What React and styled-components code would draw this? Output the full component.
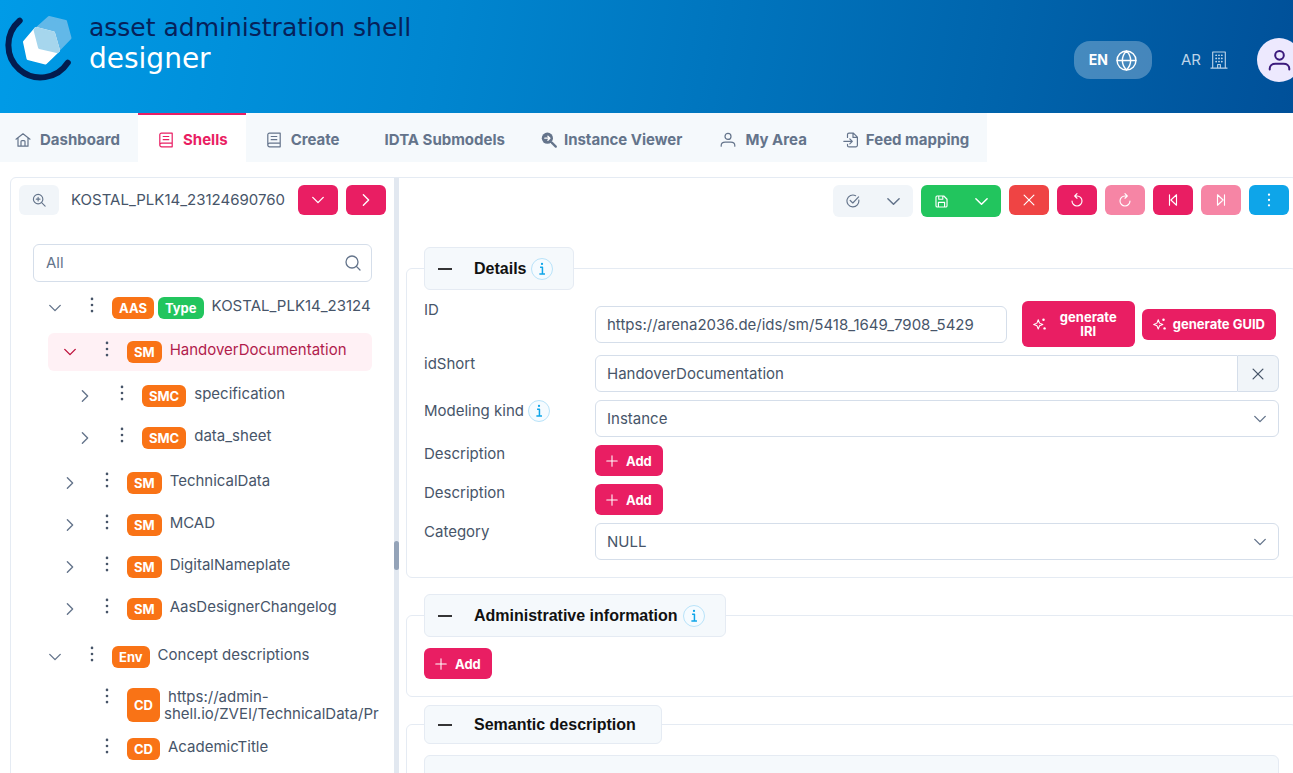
import React from "react";
import styled, { createGlobalStyle, css } from "styled-components";

const c = {
  pink: "#e91e63",
  pinkSoft: "#f685a5",
  orange: "#f97316",
  green: "#22c55e",
  red: "#ef4444",
  sky: "#0ea5e9",
  text: "#475569",
  muted: "#64748b",
  border: "#d5deea",
  line: "#e5ebf3",
  surface: "#f5f9fc",
  button: "#f1f5f9",
};

const GlobalStyle = createGlobalStyle`
  *, *::before, *::after { box-sizing: border-box; }
  body {
    margin: 0;
    background: #fff;
    color: ${c.text};
    font-family: Inter, "Liberation Sans", sans-serif;
    font-size: 15px;
    line-height: 18px;
  }
  button, input, select { font: inherit; color: inherit; }
  button { cursor: pointer; }
`;

/* ---------- icons ---------- */

const Glyph = styled.svg`
  display: block;
  flex: none;
  width: ${(p) => p.$size}px;
  height: ${(p) => p.$size}px;
  fill: none;
  stroke: currentColor;
  stroke-width: ${(p) => p.$weight};
  stroke-linecap: round;
  stroke-linejoin: round;
`;

const shapes = {
  home: (
    <path d="M1 7.2 8 1.8l7 5.4M3 6v8.2h10V6M6 14V9.6a1 1 0 0 1 1-1h2a1 1 0 0 1 1 1V14" />
  ),
  book: (
    <path d="M14 11.2H3.6a1.8 1.8 0 0 0 0 3.6H14.2V1.2H3.4a1.6 1.6 0 0 0-1.6 1.6V13M5.2 4.5h5.6M5.2 7.7h5.6" />
  ),
  searchSolid: (
    <>
      <circle cx="6.4" cy="6.2" r="5.6" fill="currentColor" stroke="none" />
      <path d="m10.8 10.6 4 4" strokeWidth="2.2" />
      <path d="M3.8 6.2h5M6.9 4.2l2 2-2 2" stroke="#fff" strokeWidth="1.3" />
    </>
  ),
  user: (
    <>
      <circle cx="8" cy="4.4" r="3" />
      <path d="M1.2 14.2v-.6c0-2.2 1.8-3.4 4-3.4h5.6c2.2 0 4 1.2 4 3.4v.6" />
    </>
  ),
  fileImport: (
    <path d="M4.5 5.5V2.6a1.5 1.5 0 0 1 1.5-1.5h4.4l4 4v8.2a1.6 1.6 0 0 1-1.6 1.6H6a1.5 1.5 0 0 1-1.5-1.5v-1M10 1.3v4.1h4.2M.8 9.3h8.4M6.8 6.8l2.5 2.5-2.5 2.5" />
  ),
  searchPlus: (
    <>
      <circle cx="7" cy="7" r="5.4" />
      <path d="m11 11 4 4M7 4.9v4.2M4.9 7h4.2" />
    </>
  ),
  search: (
    <>
      <circle cx="7" cy="7" r="6" />
      <path d="m11.4 11.4 3.6 3.6" />
    </>
  ),
  down: <path d="m2 5 6 6 6-6" />,
  right: <path d="m5 2 6 6-6 6" />,
  dots: (
    <g fill="currentColor" stroke="none">
      <circle cx="8" cy="1.9" r="1.3" />
      <circle cx="8" cy="8" r="1.3" />
      <circle cx="8" cy="14.1" r="1.3" />
    </g>
  ),
  checkCircle: (
    <path d="M14.6 6.8A6.8 6.8 0 1 1 11 1.9M4.8 7.4 7.8 10.3 14.4 3.4" />
  ),
  save: (
    <path d="M2.6 1.2h8.2l4 4v8a1.6 1.6 0 0 1-1.6 1.6H2.8a1.6 1.6 0 0 1-1.6-1.6V2.8a1.6 1.6 0 0 1 1.4-1.6ZM4.2 14.6V9h7.6v5.6M4.6 1.4v3.8h5V1.4" />
  ),
  times: <path d="m2.4 2.4 11.2 11.2M13.6 2.4 2.4 13.6" />,
  undo: <path d="M5.6 3.4H8a5.7 5.7 0 1 1-5.7 5.7M8 .8 5.4 3.4 8 6" />,
  redo: <path d="M10.4 3.4H8a5.7 5.7 0 1 0 5.7 5.7M8 .8l2.6 2.6L8 6" />,
  stepBack: <path d="M4 2v12M12 2v12L5.600 8 12 2Z" />,
  stepForward: <path d="M12 2v12M4 2v12L10.400 8 4 2Z" />,
  sparkles: (
    <>
      <path d="M6 3.2 7.5 7 11.2 8.5 7.5 10 6 13.8 4.5 10 .8 8.5 4.5 7 6 3.2Z" />
      <g fill="currentColor" stroke="none">
        <circle cx="12" cy="3.2" r="1.4" />
        <circle cx="13.2" cy="13" r="1.4" />
      </g>
    </>
  ),
  plus: <path d="M8 1v14M1 8h14" />,
  minus: <path d="M1 8h14" strokeLinecap="butt" />,
  info: (
    <>
      <path d="M5.8 6h2.7v7.6M5 13.8h6.4" strokeLinecap="butt" />
      <circle cx="8" cy="2.2" r="1.3" fill="currentColor" stroke="none" />
    </>
  ),
  globe: (
    <>
      <circle cx="8" cy="8" r="7.2" />
      <path d="M.9 8h14.2M8 .8c-4.2 4.2-4.2 10.2 0 14.4M8 .8c4.2 4.2 4.2 10.2 0 14.4" />
    </>
  ),
  building: (
    <>
      <path d="M2.4 15V.9h11.2V15M.8 15.2h14.4M6.8 15v-3h2.4v3" />
      <path
        d="M5.4 3.8h.2M7.9 3.8h.2M10.4 3.8h.2M5.4 6.6h.2M7.9 6.6h.2M10.4 6.6h.2M5.4 9.4h.2M7.9 9.4h.2M10.4 9.4h.2"
        strokeWidth="1.5"
      />
    </>
  ),
};

const Icon = ({ name, size = 14, weight = 1.2 }) => (
  <Glyph viewBox="0 0 16 16" $size={size} $weight={weight} aria-hidden="true">
    {shapes[name]}
  </Glyph>
);

/* ---------- shell ---------- */

const Page = styled.div`
  height: 100vh;
  overflow: hidden;
`;

const Header = styled.header`
  display: flex;
  align-items: flex-start;
  justify-content: space-between;
  height: 113px;
  padding-left: 5px;
  background: linear-gradient(100deg, #009be7 0%, #0086d0 34%, #0065ad 76%, #005099 100%);
`;

const Brand = styled.a`
  display: flex;
  gap: 16px;
  padding-top: 14px;
  color: #fff;
  text-decoration: none;
`;

const BrandMark = styled.svg`
  display: block;
  width: 68px;
  height: 68px;
`;

const BrandText = styled.span`
  display: flex;
  flex-direction: column;
  font-family: "DejaVu Sans", sans-serif;
`;

const BrandLine = styled.span`
  color: #06215a;
  font-size: 25px;
  line-height: 28px;
`;

const BrandName = styled.span`
  font-size: 28px;
  line-height: 34px;
`;

const HeaderTools = styled.div`
  display: flex;
  align-items: center;
  gap: 29px;
  margin: 38px -8px 0 0;
`;

const Language = styled.button`
  display: flex;
  align-items: center;
  gap: 8px;
  height: 38px;
  padding: 0 15px;
  border: 0;
  border-radius: 16px;
  background: rgba(255, 255, 255, 0.27);
  color: #fff;
  font-size: 14px;
  font-weight: 700;
`;

const Tenant = styled.button`
  display: flex;
  align-items: center;
  gap: 9px;
  padding: 0;
  border: 0;
  background: none;
  color: #bcd3e8;
`;

const Avatar = styled.button`
  display: grid;
  place-items: center;
  width: 44px;
  height: 44px;
  padding: 0;
  border: 0;
  border-radius: 50%;
  background: #ede9fe;
  color: #3b1a7c;
`;

const Tabs = styled.nav`
  display: flex;
  width: max-content;
  background: ${c.surface};
`;

const Tab = styled.a`
  display: flex;
  align-items: center;
  gap: 7px;
  height: 49px;
  padding: 2px 18px 0;
  border-top: 2px solid transparent;
  color: ${c.muted};
  font-weight: 700;
  font-size: 15px;
  text-decoration: none;
  &:first-child { padding-left: 13px; }
  ${(p) =>
    p.$active &&
    css`
      border-top-color: ${c.pink};
      background: #fff;
      color: ${c.pink};
    `}
`;

const TabIcon = styled.span`
  display: grid;
  place-items: center;
  width: ${(p) => p.$width}px;
  height: 20px;
`;

const Workspace = styled.main`
  display: flex;
  min-height: 98vh;
  margin: 15px -5px 0 10px;
  border: 1px solid ${c.line};
  border-radius: 6px;
`;

const Splitter = styled.div`
  display: flex;
  align-items: center;
  flex: 0 0 5px;
  background: #e2e8f0;
`;

const SplitterHandle = styled.div`
  width: 5px;
  height: 29px;
  border-radius: 3px;
  background: #94a3b8;
`;

/* ---------- buttons ---------- */

const tones = {
  plain: [c.button, c.muted],
  pink: [c.pink, "#fff"],
  soft: [c.pinkSoft, "#fff"],
  green: [c.green, "#fff"],
  red: [c.red, "#fff"],
  sky: [c.sky, "#fff"],
};

const IconButton = styled.button`
  display: grid;
  place-items: center;
  width: 40px;
  height: 30px;
  padding: 0;
  border: 0;
  border-radius: 6px;
  background: ${(p) => tones[p.$tone][0]};
  color: ${(p) => tones[p.$tone][1]};
`;

const SplitButton = styled.div`
  display: flex;
  border-radius: 6px;
  overflow: hidden;
  ${IconButton} {
    height: 32px;
    border-radius: 0;
  }
`;

const ActionButton = styled.button`
  display: inline-flex;
  align-items: center;
  gap: ${(p) => (p.$tight ? 6 : 8)}px;
  width: ${(p) => (p.$wrap ? "113px" : "auto")};
  min-height: ${(p) => (p.$wrap ? 46 : 31)}px;
  padding: 0 11px;
  border: 0;
  border-radius: 6px;
  background: ${c.pink};
  color: #fff;
  font-size: 13px;
  font-weight: 700;
  line-height: 14px;
  vertical-align: top;
`;

const ActionLabel = styled.span`
  flex: 1;
  text-align: center;
`;

/* ---------- sidebar ---------- */

const Sidebar = styled.aside`
  flex: 0 0 383px;
  min-width: 0;
`;

const SidebarBar = styled.div`
  display: flex;
  align-items: center;
  gap: 8px;
  padding: 7px 8px 0;
`;

const ShellName = styled.span`
  flex: 1;
  padding-left: 4px;
  white-space: nowrap;
`;

const Explorer = styled.div`
  padding: 29px 22px 0;
`;

const SearchBox = styled.label`
  display: flex;
  align-items: center;
  height: 38px;
  padding: 0 10px 0 12px;
  border: 1px solid ${c.border};
  border-radius: 6px;
  color: ${c.muted};
`;

const SearchInput = styled.input`
  flex: 1;
  min-width: 0;
  padding: 0;
  border: 0;
  outline: 0;
  background: none;
  &::placeholder { color: ${c.muted}; opacity: 1; }
`;

const TreeList = styled.ul`
  display: flex;
  flex-direction: column;
  gap: ${(p) => (p.$root ? 7 : 4)}px;
  margin: ${(p) => (p.$root ? "7px 0 0" : "6px 0 3px")};
  padding: 0 0 0 ${(p) => (p.$root ? 0 : 15)}px;
  list-style: none;
`;

const TreeRow = styled.div`
  display: flex;
  align-items: flex-start;
  gap: 4px;
  padding: ${(p) => (p.$leaf ? "6px 0" : "8px 0")};
  border-radius: 6px;
  ${(p) =>
    p.$active &&
    css`
      background: #fff1f5;
      color: #b11c4c;
    `}
`;

const Toggle = styled.button`
  display: grid;
  flex: none;
  place-items: center;
  width: 28px;
  height: 21px;
  margin-left: 8px;
  padding: 0;
  border: 0;
  background: none;
  color: ${(p) => (p.$active ? "#be123c" : c.muted)};
  visibility: ${(p) => (p.$hidden ? "hidden" : "visible")};
`;

const RowMenu = styled.button`
  display: grid;
  flex: none;
  place-items: center;
  width: 35px;
  height: 14px;
  padding: 0 0 0 2px;
  border: 0;
  background: none;
  color: ${c.text};
`;

const Badge = styled.span`
  display: flex;
  flex: none;
  align-items: center;
  align-self: stretch;
  min-height: 22px;
  padding: 0 7px;
  border-radius: 6px;
  background: ${(p) => (p.$green ? c.green : c.orange)};
  color: #fff;
  font-size: 13px;
  font-weight: 700;
`;

const NodeLabel = styled.span`
  flex: 1;
  min-width: 0;
  line-height: 17px;
  text-indent: 4px;
  white-space: ${(p) => (p.$wrap ? "normal" : "nowrap")};
`;

/* ---------- editor ---------- */

const Editor = styled.section`
  flex: 1;
  min-width: 0;
  padding-left: 7px;
`;

const Toolbar = styled.div`
  display: flex;
  justify-content: flex-end;
  gap: 8px;
  padding: 7px 8px 30px 0;
`;

const Sections = styled.div`
  display: flex;
  flex-direction: column;
  gap: 8px;
`;

const Group = styled.fieldset`
  min-width: 0;
  margin: 0 0 ${(p) => (p.$spaced ? 8 : 0)}px;
  padding: 11px 17px 17px;
  border: 1px solid ${c.line};
  border-radius: 6px;
`;

const Legend = styled.legend`
  padding: 0;
`;

const LegendButton = styled.button`
  display: flex;
  align-items: center;
  height: ${(p) => (p.$info ? 43 : 39)}px;
  padding: 0 20px 0 12px;
  border: 1px solid ${c.line};
  border-radius: 6px;
  background: ${c.surface};
  color: #111;
  font-family: "Liberation Sans", Arial, sans-serif;
  font-size: 16px;
  font-weight: 700;
`;

const LegendText = styled.span`
  padding: 0 5px 0 21px;
`;

const InfoBadge = styled.span`
  display: inline-grid;
  place-items: center;
  width: 22px;
  height: 22px;
  border: 1px solid #b9e3f9;
  border-radius: 50%;
  background: #f5fbff;
  color: ${c.sky};
`;

const FormGrid = styled.div`
  display: grid;
  grid-template-columns: 163px minmax(0, 1fr);
  gap: 8px;
`;

const FieldLabel = styled.label`
  display: flex;
  align-items: center;
  align-self: start;
  gap: 4px;
`;

const FieldRow = styled.div`
  display: flex;
  align-items: center;
  gap: 7px;
  padding-right: ${(p) => (p.$inset ? 3 : 0)}px;
`;

const TextInput = styled.input`
  flex: 1;
  min-width: 0;
  height: 37px;
  margin-right: ${(p) => (p.$spaced ? 8 : 0)}px;
  padding: 0 11px;
  border: 1px solid ${c.border};
  border-radius: 6px;
  outline: 0;
  background: #fff;
`;

const InputGroup = styled.div`
  display: flex;
  ${TextInput} { border-radius: 6px 0 0 6px; }
`;

const ClearButton = styled.button`
  display: grid;
  place-items: center;
  width: 41px;
  border: 1px solid ${c.border};
  border-left: 0;
  border-radius: 0 6px 6px 0;
  background: ${c.button};
`;

const SelectBox = styled.div`
  display: grid;
  align-items: center;
  color: ${c.muted};
  > * { grid-area: 1 / 1; }
  > svg {
    justify-self: end;
    margin-right: 12px;
    pointer-events: none;
  }
`;

const Select = styled.select`
  width: 100%;
  height: 37px;
  padding: 0 11px;
  border: 1px solid ${c.border};
  border-radius: 6px;
  appearance: none;
  background: #fff;
  color: ${c.text};
`;

const SubPanel = styled.div`
  min-height: 64px;
  border: 1px solid ${c.line};
  border-radius: 6px;
  background: ${c.surface};
`;

/* ---------- composition ---------- */

const tabs = [
  { label: "Dashboard", icon: "home", slot: 20 },
  { label: "Shells", icon: "book", slot: 20, active: true },
  { label: "Create", icon: "book", slot: 20 },
  { label: "IDTA Submodels", slot: 2 },
  { label: "Instance Viewer", icon: "searchSolid", slot: 16 },
  { label: "My Area", icon: "user", slot: 20 },
  { label: "Feed mapping", icon: "fileImport", slot: 16 },
];

const tree = [
  {
    badges: ["AAS", "Type"],
    label: "KOSTAL_PLK14_23124",
    open: true,
    children: [
      {
        badges: ["SM"],
        label: "HandoverDocumentation",
        open: true,
        active: true,
        children: [
          { badges: ["SMC"], label: "specification" },
          { badges: ["SMC"], label: "data_sheet" },
        ],
      },
      { badges: ["SM"], label: "TechnicalData" },
      { badges: ["SM"], label: "MCAD" },
      { badges: ["SM"], label: "DigitalNameplate" },
      { badges: ["SM"], label: "AasDesignerChangelog" },
    ],
  },
  {
    badges: ["Env"],
    label: "Concept descriptions",
    open: true,
    children: [
      {
        badges: ["CD"],
        label: "https://admin-shell.io/ZVEI/TechnicalData/Pr",
        wrap: true,
        leaf: true,
      },
      { badges: ["CD"], label: "AcademicTitle", leaf: true },
    ],
  },
];

const TreeNode = ({ node }) => (
  <li>
    <TreeRow $active={node.active} $leaf={node.leaf}>
      <Toggle
        type="button"
        $active={node.active}
        $hidden={node.leaf}
        aria-label={`Toggle ${node.label}`}
      >
        <Icon name={node.open ? "down" : "right"} size={14} weight={1.6} />
      </Toggle>
      <RowMenu type="button" aria-label={`Menu for ${node.label}`}>
        <Icon name="dots" size={16} />
      </RowMenu>
      {node.badges.map((b) => (
        <Badge key={b} $green={b === "Type"}>
          {b}
        </Badge>
      ))}
      <NodeLabel $wrap={node.wrap}>{node.label}</NodeLabel>
    </TreeRow>
    {node.children && (
      <TreeList>
        {node.children.map((n) => (
          <TreeNode key={n.label} node={n} />
        ))}
      </TreeList>
    )}
  </li>
);

const Info = () => (
  <InfoBadge>
    <Icon name="info" size={14} weight={1.7} />
  </InfoBadge>
);

const Section = ({ title, info, spaced, children }) => (
  <Group $spaced={spaced}>
    <Legend>
      <LegendButton type="button" $info={info}>
        <Icon name="minus" size={16} weight={1.7} />
        <LegendText>{title}</LegendText>
        {info && <Info />}
      </LegendButton>
    </Legend>
    {children}
  </Group>
);

const AddButton = () => (
  <ActionButton type="button">
    <Icon name="plus" size={12} weight={1.4} />
    Add
  </ActionButton>
);

const Dropdown = ({ id, value }) => (
  <SelectBox>
    <Select id={id} defaultValue={value}>
      <option>{value}</option>
    </Select>
    <Icon name="down" size={14} weight={1.6} />
  </SelectBox>
);

const Logo = () => (
  <BrandMark viewBox="5 14 68 68" aria-hidden="true">
    <path
      d="M19.7 20.6A32.3 32.3 0 1 0 67.8 62.7"
      fill="none"
      stroke="#031c4f"
      strokeWidth="6"
      strokeLinecap="round"
    />
    <g strokeWidth="3" strokeLinejoin="round">
      <path d="M49 17.5 65.5 21.500 70 38 57 51.500 39.500 47.500 35 30Z" fill="#62b8e8" stroke="#62b8e8" />
      <path d="M36 28.5 53.5 33 58.5 50.5 45.5 63 28 58.5 24.5 42Z" fill="#fff" stroke="#fff" />
      <path d="M36 28.5 53.5 33 58.5 50.5 57 51.5 39.5 47.5 35 30Z" fill="#a6d6ed" stroke="#a6d6ed" />
    </g>
  </BrandMark>
);

const toolbarButtons = [
  ["times", "red", "Cancel"],
  ["undo", "pink", "Undo"],
  ["redo", "soft", "Redo"],
  ["stepBack", "pink", "Previous"],
  ["stepForward", "soft", "Next"],
  ["dots", "sky", "More"],
];

export default function App() {
  return (
    <Page>
      <GlobalStyle />
      <Header>
        <Brand href="#">
          <Logo />
          <BrandText>
            <BrandLine>asset administration shell</BrandLine>
            <BrandName>designer</BrandName>
          </BrandText>
        </Brand>
        <HeaderTools>
          <Language type="button">
            EN
            <Icon name="globe" size={21} weight={1.1} />
          </Language>
          <Tenant type="button">
            AR
            <Icon name="building" size={18} weight={1} />
          </Tenant>
          <Avatar type="button" aria-label="Account">
            <Icon name="user" size={23} weight={1.4} />
          </Avatar>
        </HeaderTools>
      </Header>

      <Tabs>
        {tabs.map((t) => (
          <Tab key={t.label} href="#" $active={t.active}>
            <TabIcon $width={t.slot}>
              {t.icon && <Icon name={t.icon} size={16} weight={1.2} />}
            </TabIcon>
            {t.label}
          </Tab>
        ))}
      </Tabs>

      <Workspace>
        <Sidebar>
          <SidebarBar>
            <IconButton type="button" $tone="plain" aria-label="Zoom">
              <Icon name="searchPlus" size={14} weight={1.3} />
            </IconButton>
            <ShellName>KOSTAL_PLK14_23124690760</ShellName>
            <IconButton type="button" $tone="pink" aria-label="Open list">
              <Icon name="down" size={14} weight={1.6} />
            </IconButton>
            <IconButton type="button" $tone="pink" aria-label="Next shell">
              <Icon name="right" size={14} weight={1.6} />
            </IconButton>
          </SidebarBar>
          <Explorer>
            <SearchBox>
              <SearchInput type="text" placeholder="All" aria-label="Search" />
              <Icon name="search" size={16} weight={1.3} />
            </SearchBox>
            <TreeList $root>
              {tree.map((n) => (
                <TreeNode key={n.label} node={n} />
              ))}
            </TreeList>
          </Explorer>
        </Sidebar>

        <Splitter>
          <SplitterHandle />
        </Splitter>

        <Editor>
          <Toolbar>
            <SplitButton>
              <IconButton type="button" $tone="plain" aria-label="Validate">
                <Icon name="checkCircle" size={14} weight={1.3} />
              </IconButton>
              <IconButton type="button" $tone="plain" aria-label="Validation options">
                <Icon name="down" size={15} weight={1.6} />
              </IconButton>
            </SplitButton>
            <SplitButton>
              <IconButton type="button" $tone="green" aria-label="Save">
                <Icon name="save" size={13} weight={1.4} />
              </IconButton>
              <IconButton type="button" $tone="green" aria-label="Save options">
                <Icon name="down" size={15} weight={1.6} />
              </IconButton>
            </SplitButton>
            {toolbarButtons.map(([icon, tone, label]) => (
              <IconButton key={label} type="button" $tone={tone} aria-label={label}>
                <Icon name={icon} size={14} weight={1.3} />
              </IconButton>
            ))}
          </Toolbar>

          <Sections>
            <Section title="Details" info spaced>
              <FormGrid>
                <FieldLabel htmlFor="id">ID</FieldLabel>
                <FieldRow $inset>
                  <TextInput
                    id="id"
                    $spaced
                    defaultValue="https://arena2036.de/ids/sm/5418_1649_7908_5429"
                  />
                  <ActionButton type="button" $wrap $tight>
                    <Icon name="sparkles" size={14} />
                    <ActionLabel>generate IRI</ActionLabel>
                  </ActionButton>
                  <ActionButton type="button" $tight>
                    <Icon name="sparkles" size={14} />
                    generate GUID
                  </ActionButton>
                </FieldRow>

                <FieldLabel htmlFor="idShort">idShort</FieldLabel>
                <InputGroup>
                  <TextInput id="idShort" defaultValue="HandoverDocumentation" />
                  <ClearButton type="button" aria-label="Clear idShort">
                    <Icon name="times" size={14} weight={1.5} />
                  </ClearButton>
                </InputGroup>

                <FieldLabel htmlFor="kind">
                  Modeling kind
                  <Info />
                </FieldLabel>
                <Dropdown id="kind" value="Instance" />

                <FieldLabel as="span">Description</FieldLabel>
                <FieldRow>
                  <AddButton />
                </FieldRow>

                <FieldLabel as="span">Description</FieldLabel>
                <FieldRow>
                  <AddButton />
                </FieldRow>

                <FieldLabel htmlFor="category">Category</FieldLabel>
                <Dropdown id="category" value="NULL" />
              </FormGrid>
            </Section>

            <Section title="Administrative information" info>
              <AddButton />
            </Section>

            <Section title="Semantic description">
              <SubPanel />
            </Section>
          </Sections>
        </Editor>
      </Workspace>
    </Page>
  );
}
